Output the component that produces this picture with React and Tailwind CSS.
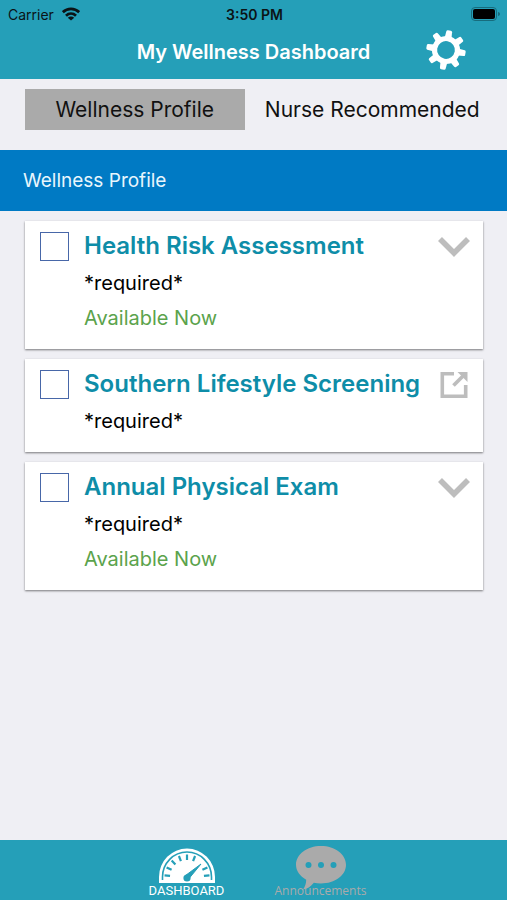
import React, { useState } from "react";

function WifiIcon() {
  return (
    <svg width="18" height="14" viewBox="0 0 18 14" fill="none" stroke="#0b1316" strokeWidth="2.8" aria-hidden="true">
      <path d="M0.800 5.200C5.400 0.800 12.600 0.800 17.200 5.200" />
      <path d="M4 8.700C6.900 6 11.100 6 14 8.700" />
      <path d="M9 13.600L5.800 10.700C7.600 9.100 10.400 9.100 12.200 10.700Z" fill="#0b1316" stroke="none" />
    </svg>
  );
}

function BatteryIcon() {
  return (
    <svg width="30" height="14" viewBox="0 0 30 14" aria-hidden="true">
      <rect x="0.5" y="0.5" width="25" height="13" rx="3.5" fill="none" stroke="#176c7d" />
      <rect x="2" y="2" width="22" height="10" rx="2" fill="#000" />
      <path d="M27 5v4c1.300-.4 2-1.100 2-2s-.7-1.600-2-2z" fill="#176c7d" />
    </svg>
  );
}

const TEETH = [0, 45, 90, 135, 180, 225, 270, 315];

function GearIcon() {
  return (
    <svg width="40" height="40" viewBox="-20 -20 40 40" aria-hidden="true">
      <g transform="rotate(10)">
        <circle r="11.500" fill="none" stroke="#fff" strokeWidth="5.200" />
        {TEETH.map((angle) => (
          <path
            key={angle}
            d="M-3.400 -12.500L-2.900 -18.500Q-2.700 -19.700 -1.500 -19.700H1.500Q2.700 -19.700 2.900 -18.500L3.400 -12.500Z"
            fill="#fff"
            transform={`rotate(${angle})`}
          />
        ))}
      </g>
    </svg>
  );
}

function ChevronIcon() {
  return (
    <svg width="32" height="20" viewBox="0 0 32 20" fill="none" stroke="#bdbdbd" strokeWidth="5.600" aria-hidden="true">
      <path d="M2 2L16 16L30 2" />
    </svg>
  );
}

function ExternalIcon() {
  return (
    <svg width="28" height="28" viewBox="0 0 28 28" fill="none" stroke="#bdbdbd" strokeWidth="3.600" aria-hidden="true">
      <path d="M14 2.800H2.300V25.200H25.700V14" />
      <path d="M13.500 14.500L23 5" strokeWidth="3.800" />
      <path d="M17.500 1H27.500V11Z" fill="#bdbdbd" stroke="none" />
    </svg>
  );
}

const TICKS = [4, 25, 47, 69, 90, 111, 155, 176];

function GaugeIcon() {
  return (
    <svg width="58" height="36" viewBox="0 0 58 36" aria-hidden="true">
      <path d="M1 35V29a28 28.500 0 0 1 56 0V35Z" fill="#fff" />
      <path d="M4.500 32V29a24.500 25 0 0 1 49 0V32" fill="none" stroke="#259fb8" strokeWidth="1.600" />
      <g stroke="#259fb8" strokeWidth="2.200">
        {TICKS.map((angle) => (
          <path key={angle} d="M-22.500 0H-17" transform={`translate(29 29) rotate(${angle})`} />
        ))}
      </g>
      <path d="M27.500 27.500L43 16L31 30.500Z" fill="#259fb8" stroke="#259fb8" strokeLinejoin="round" />
      <circle cx="29" cy="30" r="3.600" fill="#259fb8" />
    </svg>
  );
}

function ChatIcon() {
  return (
    <svg width="50" height="44" viewBox="0 0 50 44" aria-hidden="true">
      <path d="M25 0C39 0 50 8.200 50 18.800S39 37.500 25 37.500c-2.500 0-5-.3-7.200-.8C15 40.500 11 43 7 43.500c2-2.500 3.200-6 3.200-9.700C4 30.300 0 25 0 18.800 0 8.200 11 0 25 0z" fill="#aaa" />
      <circle cx="12.500" cy="19" r="3" fill="#259fb8" />
      <circle cx="25" cy="19" r="3" fill="#259fb8" />
      <circle cx="37.500" cy="19" r="3" fill="#259fb8" />
    </svg>
  );
}

const ITEMS = [
  { id: "risk", title: "Health Risk Assessment", available: true, external: false },
  { id: "lifestyle", title: "Southern Lifestyle Screening", available: false, external: true },
  { id: "exam", title: "Annual Physical Exam", available: true, external: false },
];

function ItemCard({ item }) {
  return (
    <li className="flex items-start bg-white pt-[10px] pr-[13px] pb-[13px] pl-[15px] shadow-[0_1px_2px_rgba(0,0,0,0.5)]">
      <input
        id={item.id}
        type="checkbox"
        className="mt-px size-[29px] shrink-0 appearance-none border border-[#4867a8] bg-white checked:bg-[#4867a8]"
      />
      <div className="ml-[15px] min-w-0 flex-1">
        <label htmlFor={item.id} className="mb-[5px] block text-[24px] leading-[30px] font-semibold whitespace-nowrap text-[#0e8da8]">
          {item.title}
        </label>
        <p className="text-[20px] leading-[35px] text-black">*required*</p>
        {item.available && <p className="text-[20px] leading-[35px] text-[#5ba34c]">Available Now</p>}
      </div>
      <button
        type="button"
        aria-label={item.external ? "Open " + item.title : "Expand " + item.title}
        className="flex h-8 w-8 shrink-0 items-center justify-center"
      >
        {item.external ? <ExternalIcon /> : <ChevronIcon />}
      </button>
    </li>
  );
}

export default function App() {
  const [tab, setTab] = useState("profile");
  const tabClass = "flex h-[41px] items-center justify-center text-[21px] whitespace-nowrap text-[#111] ";

  return (
    <div className="flex min-h-screen flex-col bg-[#efeff4] font-['Inter','Liberation_Sans',sans-serif]">
      <header className="h-[79px] bg-[#259fb8]">
        <div className="grid h-7 grid-cols-3 items-center pr-1.5 pl-2 text-[14px] text-[#0b1316]">
          <div className="flex items-center gap-2">
            <span>Carrier</span>
            <WifiIcon />
          </div>
          <span className="text-center font-semibold">3:50 PM</span>
          <div className="flex justify-end">
            <BatteryIcon />
          </div>
        </div>
        <div className="grid h-12 grid-cols-[1fr_auto_1fr] items-center">
          <h1 className="col-start-2 text-[20px] font-semibold whitespace-nowrap text-white">My Wellness Dashboard</h1>
          <button type="button" aria-label="Settings" className="mt-0.5 mr-[41px] self-start justify-self-end">
            <GearIcon />
          </button>
        </div>
      </header>

      <main className="flex-1">
        <div className="grid grid-cols-2 gap-[18px] px-[25px] pt-[10px] pb-5">
          <button type="button" onClick={() => setTab("profile")} className={tabClass + (tab === "profile" ? "bg-[#aaa]" : "")}>
            Wellness Profile
          </button>
          <button type="button" onClick={() => setTab("nurse")} className={tabClass + (tab === "nurse" ? "bg-[#aaa]" : "")}>
            Nurse Recommended
          </button>
        </div>
        <h2 className="bg-[#007ac4] px-[23px] text-[19px] leading-[61px] text-[#e8f6fd]">Wellness Profile</h2>
        <ul className="flex flex-col gap-[10px] pt-[10px] pr-6 pl-[25px]">
          {ITEMS.map((item) => (
            <ItemCard key={item.id} item={item} />
          ))}
        </ul>
      </main>

      <nav className="flex h-[60px] justify-center gap-[42px] bg-[#259fb8] pt-1.5">
        <a href="#dashboard" className="flex w-[92px] flex-col items-center text-[13px] leading-[14px] text-white">
          <span className="flex h-[38px] items-end">
            <GaugeIcon />
          </span>
          <span className="font-['Roboto',sans-serif]">DASHBOARD</span>
        </a>
        <a href="#announcements" className="flex w-[92px] flex-col items-center text-[12px] leading-[14px] text-[#aaa]">
          <span className="flex h-[38px] items-start">
            <ChatIcon />
          </span>
          <span className="font-['Open_Sans',sans-serif]">Announcements</span>
        </a>
      </nav>
    </div>
  );
}
